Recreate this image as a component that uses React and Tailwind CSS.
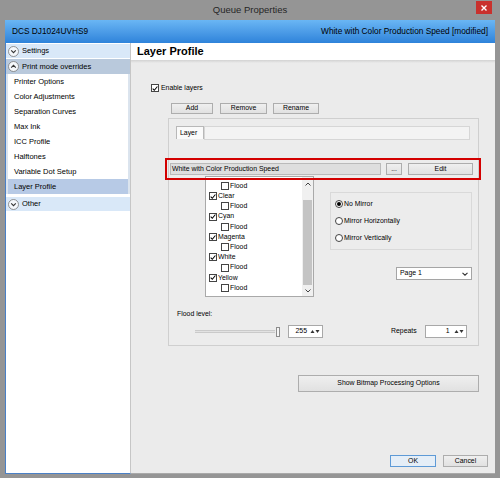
import React from "react";

function Chevron({ up }) {
  return (
    <svg width="11" height="11" viewBox="0 0 11 11" className="shrink-0">
      <circle cx="5.5" cy="5.5" r="5" fill="#f4f7fb" stroke="#7a7a7a" strokeWidth="0.8" />
      <path
        d={up ? "M3.2 6.6 L5.5 4.3 L7.8 6.6" : "M3.2 4.4 L5.5 6.7 L7.8 4.4"}
        fill="none"
        stroke="#333"
        strokeWidth="1.1"
      />
    </svg>
  );
}

function Check({ on }) {
  return (
    <span className="w-[8px] h-[8px] shrink-0 bg-white border border-[#444] flex items-center justify-center">
      {on && (
        <svg width="7" height="7" viewBox="0 0 7 7">
          <path d="M0.8 3.6 L2.7 5.6 L6.3 1.2" fill="none" stroke="#000" strokeWidth="1.2" />
        </svg>
      )}
    </span>
  );
}

function Radio({ on }) {
  return (
    <span className="w-[8px] h-[8px] shrink-0 rounded-full bg-white border border-[#444] flex items-center justify-center">
      {on && <span className="w-[4px] h-[4px] rounded-full bg-black" />}
    </span>
  );
}

function Spin() {
  return (
    <svg width="10" height="5" viewBox="0 0 10 5" className="shrink-0">
      <path d="M0.5 4 L2.5 1 L4.5 4 Z" fill="#333" />
      <path d="M5.5 1 L9.5 1 L7.5 4 Z" fill="#333" />
    </svg>
  );
}

function Btn({ children, className = "" }) {
  return (
    <div
      className={
        "flex items-center justify-center bg-gradient-to-b from-[#efefef] to-[#e1e1e1] border border-[#adadad] text-[6.9px] text-black " +
        className
      }
    >
      {children}
    </div>
  );
}

const menu = [
  "Printer Options",
  "Color Adjustments",
  "Separation Curves",
  "Max Ink",
  "ICC Profile",
  "Halftones",
  "Variable Dot Setup",
  "Layer Profile",
];

const layers = [
  { name: "Flood", sub: true },
  { name: "Clear" },
  { name: "Flood", sub: true },
  { name: "Cyan" },
  { name: "Flood", sub: true },
  { name: "Magenta" },
  { name: "Flood", sub: true },
  { name: "White" },
  { name: "Flood", sub: true },
  { name: "Yellow" },
  { name: "Flood", sub: true },
];

export default function App() {
  return (
    <div className="w-[500px] h-[478px] bg-[#959595] flex flex-col overflow-hidden font-['Liberation_Sans',Arial,sans-serif] text-black">
      {/* Title bar */}
      <div className="relative h-[20px] shrink-0 flex items-center justify-center text-[9.5px] text-[#262626]">
        Queue Properties
        <div className="absolute right-[8px] top-[1px] w-[16px] h-[13px] bg-[#c9312d] flex items-center justify-center">
          <svg width="6" height="6" viewBox="0 0 6 6">
            <path d="M0.5 0.5 L5.5 5.5 M5.5 0.5 L0.5 5.5" stroke="#fff" strokeWidth="1.4" />
          </svg>
        </div>
      </div>

      <div className="flex-1 flex flex-col px-[5px] pb-[4px] min-h-0">
        {/* Blue header */}
        <div className="h-[23px] shrink-0 flex items-center justify-between px-[7px] bg-gradient-to-b from-[#6ab6f4] to-[#2e83da] text-[8.3px]">
          <span>DCS DJ1024UVHS9</span>
          <span>White with Color Production Speed [modified]</span>
        </div>

        <div className="flex-1 flex min-h-0">
          {/* Sidebar */}
          <div className="w-[126px] shrink-0 bg-white border-l border-b border-r border-[#4a80c6] border-r-[#c6c6c6] flex flex-col text-[7.5px]">
            <div className="mt-[1px] h-[14px] bg-[#d9e8f8] flex items-center gap-[3px] pl-[2px]">
              <Chevron />
              <span>Settings</span>
            </div>
            <div className="mt-[1px] bg-[#dbe4ee] flex flex-col">
              <div className="h-[15px] bg-[#b9c9dc] flex items-center gap-[3px] pl-[2px]">
                <Chevron up />
                <span>Print mode overrides</span>
              </div>
              <div className="mx-[2px] bg-white flex flex-col">
                {menu.map((m, i) => (
                  <div
                    key={m}
                    className={
                      "h-[15px] flex items-center pl-[6px] " +
                      (i === menu.length - 1 ? "bg-[#b7cae6]" : "")
                    }
                  >
                    {m}
                  </div>
                ))}
              </div>
            </div>
            <div className="mt-[3px] h-[14px] bg-[#d9e8f8] flex items-center gap-[3px] pl-[2px]">
              <Chevron />
              <span>Other</span>
            </div>
          </div>

          {/* Right panel */}
          <div className="flex-1 flex flex-col bg-[#ebebeb] border-b border-[#a9a9a9] text-[6.9px]">
            <div className="h-[17px] shrink-0 bg-white flex items-center pl-[6px] text-[11px] font-bold">
              Layer Profile
            </div>
            <div className="h-[3px] shrink-0 bg-gradient-to-b from-[#d2d2d2] to-[#ebebeb]" />

            <div className="flex-1 flex flex-col">
              {/* Enable layers */}
              <div className="mt-[21px] ml-[20px] h-[8px] flex items-center gap-[2px]">
                <Check on />
                <span>Enable layers</span>
              </div>

              {/* Add / Remove / Rename */}
              <div className="mt-[11px] ml-[40px] flex">
                <Btn className="w-[42px] h-[11px]">Add</Btn>
                <Btn className="ml-[7px] w-[47px] h-[11px]">Remove</Btn>
                <Btn className="ml-[6px] w-[46px] h-[11px]">Rename</Btn>
              </div>

              {/* Tab container */}
              <div className="relative mt-[4px] ml-[37px] mr-[16px] h-[228px] shrink-0 border border-[#cfcfcf] bg-[#ececec] flex flex-col">
                <div className="mt-[7px] ml-[7px] mr-[8px] flex h-[14px]">
                  <div className="w-[28px] h-[13px] bg-[#fafafa] border border-b-0 border-[#b8b8b8] flex items-center pl-[3px]">
                    Layer
                  </div>
                  <div className="flex-1 bg-[#f3f3f3] border border-[#d6d6d6]" />
                </div>

                {/* Layer profile row */}
                <div className="mt-[23px] ml-[1px] flex h-[12px]">
                  <div className="w-[211px] bg-[#dedede] border border-[#bababa] flex items-center pl-[1px]">
                    White with Color Production Speed
                  </div>
                  <Btn className="ml-[5px] w-[16px]">...</Btn>
                  <Btn className="ml-[6px] w-[65px]">Edit</Btn>
                </div>

                {/* List + options */}
                <div className="mt-[1px] flex">
                  <div className="ml-[36px] w-[109px] h-[121px] bg-white border border-[#a9a9a9] flex">
                    <div className="flex-1 flex flex-col pt-[4px]">
                      {layers.map((l, i) => (
                        <div
                          key={i}
                          className={
                            "h-[10.2px] flex items-center gap-[1px] " +
                            (l.sub ? "pl-[15px]" : "pl-[3px]")
                          }
                        >
                          <Check on={!l.sub} />
                          <span>{l.name}</span>
                        </div>
                      ))}
                    </div>
                    <div className="w-[11px] bg-[#f0f0f0] flex flex-col items-center">
                      <div className="h-[12px] flex items-center pt-[2px]">
                        <svg width="6" height="4" viewBox="0 0 6 4">
                          <path d="M0.5 3.5 L3 1 L5.5 3.5" fill="none" stroke="#444" strokeWidth="1" />
                        </svg>
                      </div>
                      <div className="h-[11px]" />
                      <div className="w-[9px] h-[85px] bg-[#c4c4c4]" />
                      <div className="flex-1" />
                      <div className="h-[10px] flex items-center">
                        <svg width="6" height="4" viewBox="0 0 6 4">
                          <path d="M0.5 0.5 L3 3 L5.5 0.5" fill="none" stroke="#444" strokeWidth="1" />
                        </svg>
                      </div>
                    </div>
                  </div>

                  <div className="ml-[16px] flex flex-col">
                    <div className="mt-[16px] w-[142px] h-[58px] border border-[#d9d9d9] flex flex-col pl-[4px] pt-[7px] gap-[9px]">
                      <div className="h-[8px] flex items-center gap-[1px]">
                        <Radio on />
                        <span>No Mirror</span>
                      </div>
                      <div className="h-[8px] flex items-center gap-[1px]">
                        <Radio />
                        <span>Mirror Horizontally</span>
                      </div>
                      <div className="h-[8px] flex items-center gap-[1px]">
                        <Radio />
                        <span>Mirror Vertically</span>
                      </div>
                    </div>
                    <div className="mt-[17px] ml-[66px] w-[76px] h-[13px] bg-white border border-[#a5a5a5] flex items-center justify-between pl-[3px] pr-[3px]">
                      <span>Page 1</span>
                      <svg width="6" height="4" viewBox="0 0 6 4">
                        <path d="M0.5 0.8 L3 3.2 L5.5 0.8" fill="none" stroke="#333" strokeWidth="1.1" />
                      </svg>
                    </div>
                  </div>
                </div>

                {/* Flood level */}
                <div className="mt-[13px] ml-[8px] h-[8px] flex items-center">Flood level:</div>
                <div className="mt-[7px] flex items-center h-[13px]">
                  <div className="ml-[26px] w-[85px] flex items-center">
                    <div className="flex-1 h-[3px] bg-[#e2e2e2] border-t border-b border-[#cacaca]" />
                    <div className="ml-[1px] w-[4px] h-[10px] bg-[#f6f6f6] border border-[#8c8c8c]" />
                  </div>
                  <div className="ml-[8px] w-[35px] h-[13px] bg-white border border-[#a8a8a8] flex items-center justify-end gap-[3px] pr-[2px]">
                    <span>255</span>
                    <Spin />
                  </div>
                  <span className="ml-[68px]">Repeats</span>
                  <div className="ml-[8px] w-[42px] h-[13px] bg-white border border-[#a8a8a8] flex items-center justify-end gap-[4px] pr-[2px]">
                    <span>1</span>
                    <Spin />
                  </div>
                </div>

                {/* annotation highlight */}
                <div className="absolute left-[-4px] top-[39px] w-[316px] h-[22px] border-2 border-[#d30000]" />
              </div>

              <Btn className="mt-[29px] ml-[167px] w-[181px] h-[17px]">Show Bitmap Processing Options</Btn>

              <div className="mt-auto mb-[6px] mr-[7px] flex justify-end gap-[7px]">
                <div className="w-[46px] h-[12px] flex items-center justify-center bg-[#e5eef7] border border-[#5e9ad6]">
                  OK
                </div>
                <Btn className="w-[45px] h-[12px]">Cancel</Btn>
              </div>
            </div>
          </div>
        </div>
      </div>
    </div>
  );
}
